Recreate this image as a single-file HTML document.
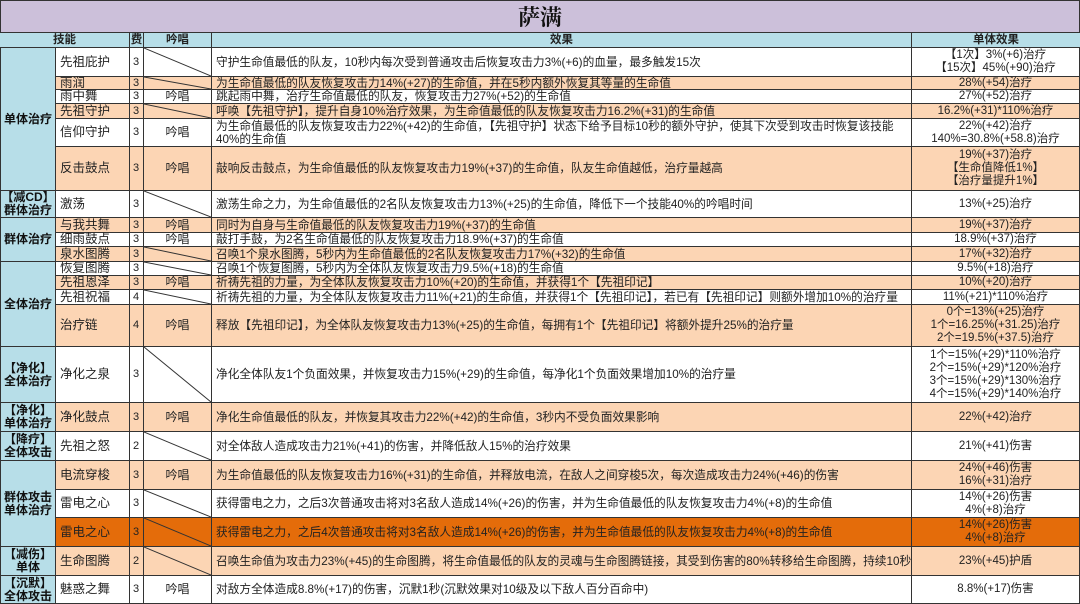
<!DOCTYPE html>
<html><head><meta charset="utf-8"><style>
*{box-sizing:border-box;margin:0;padding:0}
body{width:1080px;height:604px;background:#fff;font-family:"Liberation Sans","Noto Sans CJK SC",sans-serif;font-size:11px;color:#222;position:relative;overflow:hidden}
.t{position:absolute;left:0;top:0;width:1080px;height:33px;background:#ccc0da;border:1px solid #333;display:flex;align-items:center;justify-content:center;font-family:"Noto Serif CJK SC",serif;font-weight:bold;font-size:22px;color:#111}
.h{position:absolute;top:33px;height:15px;left:0;width:1080px;background:#b7dee8;border-bottom:1px solid #333;font-weight:bold;font-size:11.5px}
.h span{position:absolute;top:0;height:15px;line-height:14px;text-align:center;border-right:1px solid #333}
.cat{position:absolute;left:0;width:56px;background:#b7dee8;border-right:1px solid #333;border-bottom:1px solid #333;border-left:1px solid #333;display:flex;align-items:center;justify-content:center;text-align:center;font-weight:bold;font-size:12px;line-height:13px;color:#111}
.r{position:absolute;left:56px;width:1024px;border-bottom:1px solid #333;display:flex}
.r>div{height:100%;border-right:1px solid #333;display:flex;align-items:center;position:relative;line-height:13px}
.n{width:74px;padding-left:4px;font-size:12.5px}
.c{width:14px;padding-left:3px}
.s{width:68px;justify-content:center;font-size:12px}
.e{width:700px;padding-left:4px;white-space:nowrap;font-size:11.7px}
.v{width:168px;justify-content:center;text-align:center;flex-direction:column;font-size:11.5px}
.o{background:#fcd5b4}
.d{background:#e46c0a}
svg{position:absolute;left:0;top:0;width:100%;height:100%}
</style></head><body>
<div class="t">萨满</div>
<div class="h">
<span style="left:0;width:130px">技能</span>
<span style="left:130px;width:14px">费</span>
<span style="left:144px;width:68px">吟唱</span>
<span style="left:212px;width:700px">效果</span>
<span style="left:912px;width:168px;border-right:none">单体效果</span>
</div>

<div class="cat" style="top:48px;height:143px">单体治疗</div>
<div class="cat" style="top:191px;height:27px">【减CD】<br>群体治疗</div>
<div class="cat" style="top:218px;height:44px">群体治疗</div>
<div class="cat" style="top:262px;height:85px">全体治疗</div>
<div class="cat" style="top:347px;height:56px">【净化】<br>全体治疗</div>
<div class="cat" style="top:403px;height:29px">【净化】<br>单体治疗</div>
<div class="cat" style="top:432px;height:29px">【降疗】<br>全体攻击</div>
<div class="cat" style="top:461px;height:86px">群体攻击<br>单体治疗</div>
<div class="cat" style="top:547px;height:29px">【减伤】<br>单体</div>
<div class="cat" style="top:576px;height:28px">【沉默】<br>全体攻击</div>

<div class="r" style="top:48px;height:29px"><div class="n">先祖庇护</div><div class="c">3</div><div class="s"><svg preserveAspectRatio="none" viewBox="0 0 10 10"><line x1="0" y1="0" x2="10" y2="10" stroke="#333" stroke-width="1" vector-effect="non-scaling-stroke"/></svg></div><div class="e">守护生命值最低的队友，10秒内每次受到普通攻击后恢复攻击力3%(+6)的血量，最多触发15次</div><div class="v">【1次】3%(+6)治疗<br>【15次】45%(+90)治疗</div></div>
<div class="r o" style="top:77px;height:13px"><div class="n">雨润</div><div class="c">3</div><div class="s"><svg preserveAspectRatio="none" viewBox="0 0 10 10"><line x1="0" y1="0" x2="10" y2="10" stroke="#333" stroke-width="1" vector-effect="non-scaling-stroke"/></svg></div><div class="e">为生命值最低的队友恢复攻击力14%(+27)的生命值，并在5秒内额外恢复其等量的生命值</div><div class="v">28%(+54)治疗</div></div>
<div class="r" style="top:90px;height:14px"><div class="n">雨中舞</div><div class="c">3</div><div class="s">吟唱</div><div class="e">跳起雨中舞，治疗生命值最低的队友，恢复攻击力27%(+52)的生命值</div><div class="v">27%(+52)治疗</div></div>
<div class="r o" style="top:104px;height:15px"><div class="n">先祖守护</div><div class="c">3</div><div class="s"><svg preserveAspectRatio="none" viewBox="0 0 10 10"><line x1="0" y1="0" x2="10" y2="10" stroke="#333" stroke-width="1" vector-effect="non-scaling-stroke"/></svg></div><div class="e">呼唤【先祖守护】，提升自身10%治疗效果，为生命值最低的队友恢复攻击力16.2%(+31)的生命值</div><div class="v">16.2%(+31)*110%治疗</div></div>
<div class="r" style="top:119px;height:28px"><div class="n">信仰守护</div><div class="c">3</div><div class="s">吟唱</div><div class="e" style="white-space:normal">为生命值最低的队友恢复攻击力22%(+42)的生命值，【先祖守护】状态下给予目标10秒的额外守护，使其下次受到攻击时恢复该技能40%的生命值</div><div class="v">22%(+42)治疗<br>140%=30.8%(+58.8)治疗</div></div>
<div class="r o" style="top:147px;height:44px"><div class="n">反击鼓点</div><div class="c">3</div><div class="s">吟唱</div><div class="e">敲响反击鼓点，为生命值最低的队友恢复攻击力19%(+37)的生命值，队友生命值越低，治疗量越高</div><div class="v">19%(+37)治疗<br>【生命值降低1%】<br>【治疗量提升1%】</div></div>
<div class="r" style="top:191px;height:27px"><div class="n">激荡</div><div class="c">3</div><div class="s"><svg preserveAspectRatio="none" viewBox="0 0 10 10"><line x1="0" y1="0" x2="10" y2="10" stroke="#333" stroke-width="1" vector-effect="non-scaling-stroke"/></svg></div><div class="e">激荡生命之力，为生命值最低的2名队友恢复攻击力13%(+25)的生命值，降低下一个技能40%的吟唱时间</div><div class="v">13%(+25)治疗</div></div>
<div class="r o" style="top:218px;height:15px"><div class="n">与我共舞</div><div class="c">3</div><div class="s">吟唱</div><div class="e">同时为自身与生命值最低的队友恢复攻击力19%(+37)的生命值</div><div class="v">19%(+37)治疗</div></div>
<div class="r" style="top:233px;height:14px"><div class="n">细雨鼓点</div><div class="c">3</div><div class="s">吟唱</div><div class="e">敲打手鼓，为2名生命值最低的队友恢复攻击力18.9%(+37)的生命值</div><div class="v">18.9%(+37)治疗</div></div>
<div class="r o" style="top:247px;height:15px"><div class="n">泉水图腾</div><div class="c">3</div><div class="s"><svg preserveAspectRatio="none" viewBox="0 0 10 10"><line x1="0" y1="0" x2="10" y2="10" stroke="#333" stroke-width="1" vector-effect="non-scaling-stroke"/></svg></div><div class="e">召唤1个泉水图腾，5秒内为生命值最低的2名队友恢复攻击力17%(+32)的生命值</div><div class="v">17%(+32)治疗</div></div>
<div class="r" style="top:262px;height:14px"><div class="n">恢复图腾</div><div class="c">3</div><div class="s"><svg preserveAspectRatio="none" viewBox="0 0 10 10"><line x1="0" y1="0" x2="10" y2="10" stroke="#333" stroke-width="1" vector-effect="non-scaling-stroke"/></svg></div><div class="e">召唤1个恢复图腾，5秒内为全体队友恢复攻击力9.5%(+18)的生命值</div><div class="v">9.5%(+18)治疗</div></div>
<div class="r o" style="top:276px;height:14px"><div class="n">先祖恩泽</div><div class="c">3</div><div class="s">吟唱</div><div class="e">祈祷先祖的力量，为全体队友恢复攻击力10%(+20)的生命值，并获得1个【先祖印记】</div><div class="v">10%(+20)治疗</div></div>
<div class="r" style="top:290px;height:15px"><div class="n">先祖祝福</div><div class="c">4</div><div class="s"><svg preserveAspectRatio="none" viewBox="0 0 10 10"><line x1="0" y1="0" x2="10" y2="10" stroke="#333" stroke-width="1" vector-effect="non-scaling-stroke"/></svg></div><div class="e">祈祷先祖的力量，为全体队友恢复攻击力11%(+21)的生命值，并获得1个【先祖印记】，若已有【先祖印记】则额外增加10%的治疗量</div><div class="v">11%(+21)*110%治疗</div></div>
<div class="r o" style="top:305px;height:42px"><div class="n">治疗链</div><div class="c">4</div><div class="s">吟唱</div><div class="e">释放【先祖印记】，为全体队友恢复攻击力13%(+25)的生命值，每拥有1个【先祖印记】将额外提升25%的治疗量</div><div class="v">0个=13%(+25)治疗<br>1个=16.25%(+31.25)治疗<br>2个=19.5%(+37.5)治疗</div></div>
<div class="r" style="top:347px;height:56px"><div class="n">净化之泉</div><div class="c">3</div><div class="s"><svg preserveAspectRatio="none" viewBox="0 0 10 10"><line x1="0" y1="0" x2="10" y2="10" stroke="#333" stroke-width="1" vector-effect="non-scaling-stroke"/></svg></div><div class="e">净化全体队友1个负面效果，并恢复攻击力15%(+29)的生命值，每净化1个负面效果增加10%的治疗量</div><div class="v">1个=15%(+29)*110%治疗<br>2个=15%(+29)*120%治疗<br>3个=15%(+29)*130%治疗<br>4个=15%(+29)*140%治疗</div></div>
<div class="r o" style="top:403px;height:29px"><div class="n">净化鼓点</div><div class="c">3</div><div class="s">吟唱</div><div class="e">净化生命值最低的队友，并恢复其攻击力22%(+42)的生命值，3秒内不受负面效果影响</div><div class="v">22%(+42)治疗</div></div>
<div class="r" style="top:432px;height:29px"><div class="n">先祖之怒</div><div class="c">2</div><div class="s"><svg preserveAspectRatio="none" viewBox="0 0 10 10"><line x1="0" y1="0" x2="10" y2="10" stroke="#333" stroke-width="1" vector-effect="non-scaling-stroke"/></svg></div><div class="e">对全体敌人造成攻击力21%(+41)的伤害，并降低敌人15%的治疗效果</div><div class="v">21%(+41)伤害</div></div>
<div class="r o" style="top:461px;height:29px"><div class="n">电流穿梭</div><div class="c">3</div><div class="s">吟唱</div><div class="e">为生命值最低的队友恢复攻击力16%(+31)的生命值，并释放电流，在敌人之间穿梭5次，每次造成攻击力24%(+46)的伤害</div><div class="v">24%(+46)伤害<br>16%(+31)治疗</div></div>
<div class="r" style="top:490px;height:28px"><div class="n">雷电之心</div><div class="c">3</div><div class="s"><svg preserveAspectRatio="none" viewBox="0 0 10 10"><line x1="0" y1="0" x2="10" y2="10" stroke="#333" stroke-width="1" vector-effect="non-scaling-stroke"/></svg></div><div class="e">获得雷电之力，之后3次普通攻击将对3名敌人造成14%(+26)的伤害，并为生命值最低的队友恢复攻击力4%(+8)的生命值</div><div class="v">14%(+26)伤害<br>4%(+8)治疗</div></div>
<div class="r d" style="top:518px;height:29px"><div class="n">雷电之心</div><div class="c">3</div><div class="s"><svg preserveAspectRatio="none" viewBox="0 0 10 10"><line x1="0" y1="0" x2="10" y2="10" stroke="#333" stroke-width="1" vector-effect="non-scaling-stroke"/></svg></div><div class="e">获得雷电之力，之后4次普通攻击将对3名敌人造成14%(+26)的伤害，并为生命值最低的队友恢复攻击力4%(+8)的生命值</div><div class="v">14%(+26)伤害<br>4%(+8)治疗</div></div>
<div class="r o" style="top:547px;height:29px"><div class="n">生命图腾</div><div class="c">2</div><div class="s"><svg preserveAspectRatio="none" viewBox="0 0 10 10"><line x1="0" y1="0" x2="10" y2="10" stroke="#333" stroke-width="1" vector-effect="non-scaling-stroke"/></svg></div><div class="e">召唤生命值为攻击力23%(+45)的生命图腾，将生命值最低的队友的灵魂与生命图腾链接，其受到伤害的80%转移给生命图腾，持续10秒</div><div class="v">23%(+45)护盾</div></div>
<div class="r" style="top:576px;height:28px"><div class="n">魅惑之舞</div><div class="c">3</div><div class="s">吟唱</div><div class="e">对敌方全体造成8.8%(+17)的伤害，沉默1秒(沉默效果对10级及以下敌人百分百命中)</div><div class="v">8.8%(+17)伤害</div></div>
</body></html>
